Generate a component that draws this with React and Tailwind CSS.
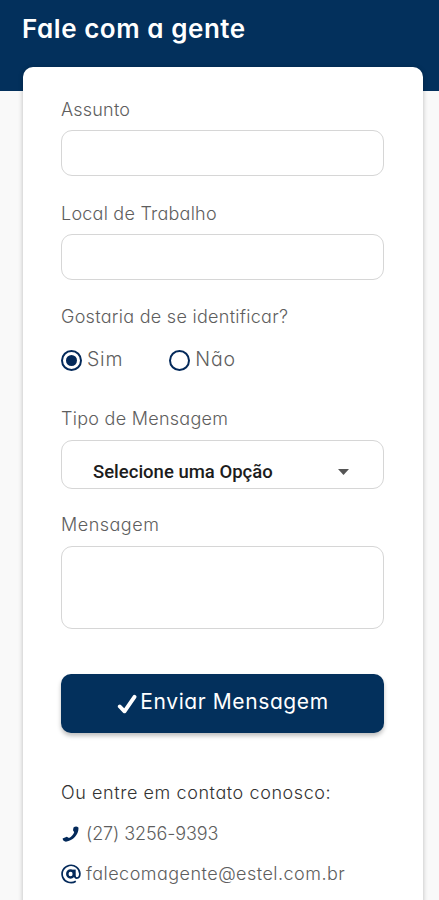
import { useState } from 'react'

const inputClass = 'block w-[323px] border border-[#d6d6d6] rounded-[11px] bg-white outline-none px-4'

function Label({ className = '', children }) {
  return <span className={`block h-6 leading-6 text-[18px] font-light text-[#5e5e5e] whitespace-nowrap ${className}`}>{children}</span>
}

function Radio({ checked, onClick, children }) {
  return (
    <button type="button" onClick={onClick} className="flex items-center gap-[5px]">
      <span className="mt-[5px] w-[21px] h-[21px] rounded-full border-2 border-[#03295a] flex items-center justify-center">
        {checked && <span className="block w-[11px] h-[11px] rounded-full bg-[#03295a]" />}
      </span>
      <span className="leading-6 pt-px text-[19.5px] font-light text-[#5e5e5e] tracking-[0.8px]">{children}</span>
    </button>
  )
}

function CheckIcon() {
  return (
    <svg width="20" height="20" viewBox="0 0 20 20" className="mt-1" fill="none" stroke="currentColor" strokeWidth="3.900" strokeLinecap="round" strokeLinejoin="round">
      <path d="M2.800 12.500l4.700 4.800L17.500 2.800" />
    </svg>
  )
}

function PhoneIcon() {
  return (
    <svg width="17" height="17" viewBox="0 0 17 17" fill="#03295a">
      <path d="M11.500 1.500q2.500-1.700 4.900-.1c.8 6-4.800 13.500-12.500 14.300C2 15.600.8 14.300.6 12.600l4.200-1.900 2.200 1.300c2.500-1.200 4.300-3.200 5.200-5.700L11 4.200z" />
    </svg>
  )
}

function AtIcon() {
  return (
    <svg width="20" height="20" viewBox="0 0 20 20" fill="none" stroke="#03295a">
      <path strokeWidth="1.700" d="M14.800 17.300A8.900 8.700 0 1 1 18.900 9.600c0 2.900-1.400 4.500-3.100 4.500-1.400 0-2-.8-2-2.300" />
      <path strokeWidth="2.800" d="M13.300 5.600v7.200" />
      <ellipse cx="9.600" cy="9.900" rx="3.300" ry="3.500" strokeWidth="2.500" />
    </svg>
  )
}

export default function App() {
  const [identify, setIdentify] = useState(true)

  return (
    <div className="h-[900px] overflow-hidden bg-[#f9f9f9] font-['Inter',sans-serif] [font-feature-settings:'cv11']">
      <header className="h-[91px] bg-[#03305c] pl-[22px] pt-[13px]">
        <h1 className="leading-8 text-[26px] font-semibold text-white whitespace-nowrap tracking-[0.55px]">Fale com a gente</h1>
      </header>
      <main className="relative -mt-6 ml-[23px] w-[400px] h-[860px] rounded-[10px] bg-white px-[38px] pt-[31px] shadow-[0_1px_5px_rgba(0,0,0,0.25)]">
        <Label className="tracking-[0.2px]">Assunto</Label>
        <input className={`${inputClass} mt-2 h-[46px]`} />

        <Label className="mt-[26px] tracking-[0.23px]">Local de Trabalho</Label>
        <input className={`${inputClass} mt-2 h-[46px]`} />

        <Label className="mt-[25px] tracking-[0.28px]">Gostaria de se identificar?</Label>
        <div className="mt-[17px] h-6 flex items-center gap-[46px]">
          <Radio checked={identify} onClick={() => setIdentify(true)}>Sim</Radio>
          <Radio checked={!identify} onClick={() => setIdentify(false)}>Não</Radio>
        </div>

        <Label className="mt-[37px] tracking-[0.27px]">Tipo de Mensagem</Label>
        <button type="button" className={`${inputClass} mt-[9px] h-[49px] flex items-center justify-between pl-[31px] pr-[34px] pt-[15px]`}>
          <span className="font-['Roboto',sans-serif] text-[18.5px] leading-6 font-medium text-[#1c1c1c] whitespace-nowrap">Selecione uma Opção</span>
          <svg width="11" height="6" viewBox="0 0 11 6" fill="#555"><path d="M0 0h11L5.500 6z" /></svg>
        </button>

        <Label className="mt-6 tracking-[0.5px]">Mensagem</Label>
        <textarea className={`${inputClass} mt-[9px] h-[83px] resize-none`} />

        <button type="button" className="mt-[45px] w-[323px] h-[59px] rounded-[10px] bg-[#03305c] text-white flex items-center justify-center gap-[3px] pb-1 pl-px shadow-[0_3px_4px_rgba(0,0,0,0.25)]">
          <CheckIcon />
          <span className="text-[21px] leading-7 whitespace-nowrap tracking-[0.6px]">Enviar Mensagem</span>
        </button>

        <p className="mt-12 leading-6 text-[18px] font-light text-[#333] whitespace-nowrap tracking-[0.58px]">Ou entre em contato conosco:</p>
        <div className="mt-[17px] h-6 flex items-center gap-[7px]">
          <span className="ml-px"><PhoneIcon /></span>
          <Label className="tracking-[-0.1px]">(27) 3256-9393</Label>
        </div>
        <div className="mt-4 h-6 flex items-center gap-[5px]">
          <AtIcon />
          <Label className="tracking-[0.47px]">falecomagente@estel.com.br</Label>
        </div>
      </main>
    </div>
  )
}
